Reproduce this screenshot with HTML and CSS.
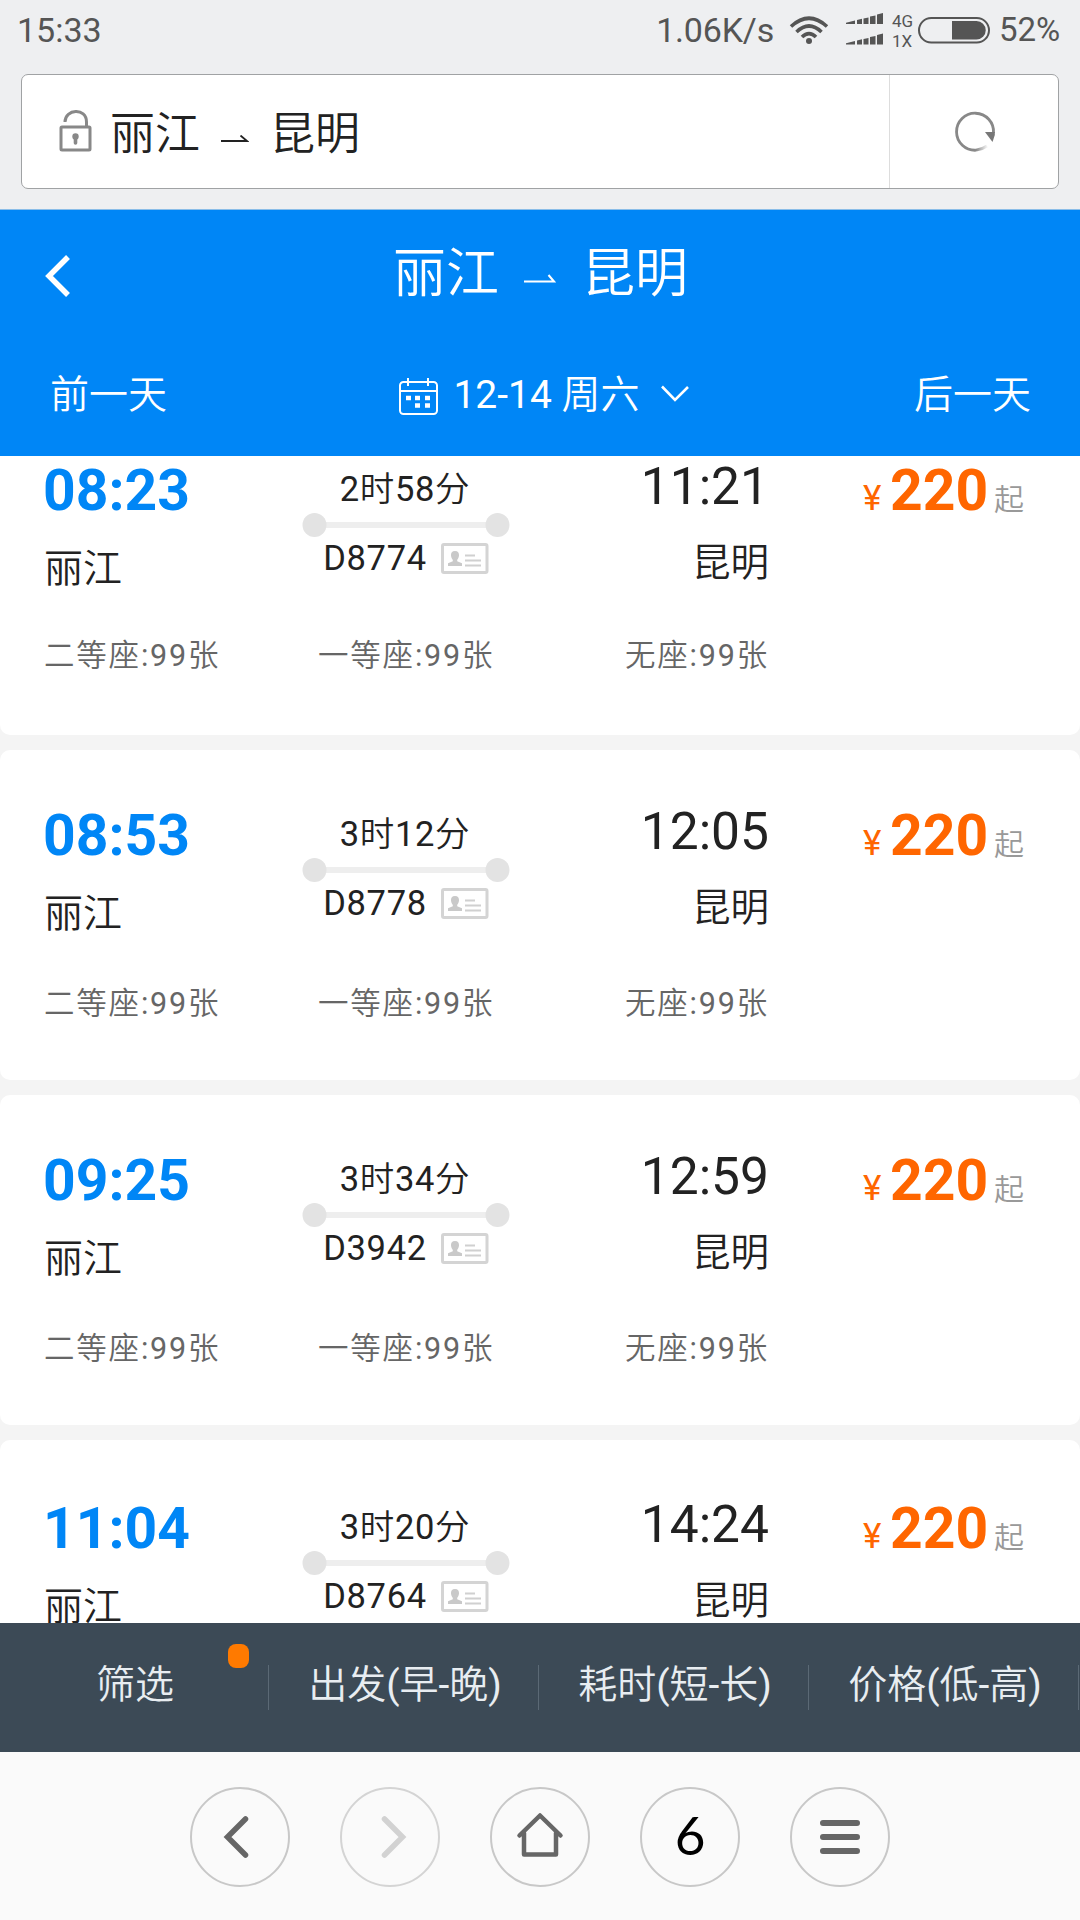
FILE: index.html
```html
<!DOCTYPE html>
<html lang="zh-CN">
<head>
<meta charset="utf-8">
<title>丽江 ⇀ 昆明</title>
<link rel="stylesheet" href="styles.css">
</head>
<body>
<svg class="defs" width="0" height="0">
  <symbol id="route" viewBox="0 0 208 24"><rect x="12" y="9" width="184" height="6" fill="#eee"/><circle cx="12.5" cy="12" r="12" fill="#e3e3e3"/><circle cx="195.500" cy="12" r="12" fill="#e3e3e3"/></symbol>
  <symbol id="idcard" viewBox="0 0 48 31"><rect x="1.500" y="1.500" width="44.500" height="28" rx="1.500" fill="#fff" stroke="#d4d4d4" stroke-width="3"/><path d="M14 8c-3 0-4.200 2-4 4.500.2 2.500 1.200 3.500 1.800 4.300v1.400L7 20.300V23h14v-2.700l-4.800-2.100v-1.400c.6-.8 1.600-1.800 1.800-4.300.2-2.500-1-4.500-4-4.500z" fill="#c9c9c9"/><path d="M24 12.500h10M24 17.500h16M24 22.500h16" stroke="#d0d0d0" stroke-width="2"/></symbol>
</svg>

<header class="statusbar">
  <span class="clock">15:33</span>
  <span class="speed">1.06K/s</span>
  <svg class="wifi" width="40" height="30" viewBox="0 0 40 30" fill="none" stroke="#555" stroke-width="3.600"><path d="M2 11.500Q20-5 38 11.500M7.500 17Q20 5 32.500 17M13 22Q20 15 27 22"/><circle cx="20" cy="26" r="3" fill="#555" stroke="none"/></svg>
  <svg class="signal" width="38" height="34" viewBox="0 0 38 34" fill="#555"><path id="bars" d="M0 11V9.800L9 7.500V11zM11 11V7l5-1.200V11zM17.500 11V5.500l5-1V11zM24 11V3.500l5.500-1V11zM31 11V1.500l6-1.500V11z"/><use href="#bars" y="20.500"/></svg>
  <span class="network"><span>4G</span><span>1X</span></span>
  <svg class="battery" width="72" height="28" viewBox="0 0 72 28"><rect x="1" y="2" width="70" height="24.500" rx="12.250" fill="none" stroke="#555" stroke-width="2"/><path d="M34 5h24.500a9 9 0 0 1 0 18.500H34z" fill="#555"/></svg>
  <span class="percent">52%</span>
</header>

<div class="address">
  <div class="page-name">
    <svg width="34" height="42" viewBox="0 0 34 42" fill="none" stroke="#888"><rect x="2" y="17" width="29" height="23" rx="1" stroke-width="3"/><path d="M6 12C6 -1.500 27.500-2.500 27.500 12v4" stroke-width="3"/><path d="M16.500 26v7" stroke-width="3.600" stroke-linecap="round"/><circle cx="16.500" cy="26.500" r="3.200" fill="#888" stroke="none"/></svg>
    <span>丽江</span>
    <svg class="arrow" width="28" height="8" viewBox="0 0 28 8"><path d="M0 6h26L19.500.5" fill="none" stroke="#222" stroke-width="1.800"/></svg>
    <span>昆明</span>
  </div>
  <div class="reload">
    <svg width="42" height="42" viewBox="0 0 42 42"><defs><linearGradient id="fade" gradientUnits="userSpaceOnUse" x1="22" y1="0" x2="33" y2="0"><stop offset="0" stop-color="#888"/><stop offset="1" stop-color="#888" stop-opacity=".1"/></linearGradient></defs><path d="M22 39.200A18.500 18.500 0 1 1 39.500 22" fill="none" stroke="#888" stroke-width="2.800"/><path d="M22 39.200Q28 38.500 33 35" fill="none" stroke="url(#fade)" stroke-width="2.800"/><path d="M31 21h9.800v3l-2.300 7z" fill="#777"/></svg>
  </div>
</div>

<section class="route-header">
  <div class="title-row">
    <svg class="back" width="27" height="44" viewBox="0 0 27 44"><path d="M24 3L5 22l19 19" fill="none" stroke="#fff" stroke-width="5.500"/></svg>
    <h1><span>丽江</span><svg width="32" height="10" viewBox="0 0 32 10"><path d="M0 7.500h30L24.500 1" fill="none" stroke="#fff" stroke-width="2"/></svg><span>昆明</span></h1>
  </div>
  <div class="date-row">
    <span class="day">前一天</span>
    <span class="date">
      <svg width="39" height="38" viewBox="0 0 39 38" fill="none" stroke="#fff" stroke-width="2"><rect x="1" y="4" width="37" height="32" rx="3.500"/><path d="M1 13h37M9 0v8M29 0v8"/><path d="M7 20h5M16 20h5M26 20h5M16 27.500h5M26 27.500h5" stroke-width="4.500"/></svg>
      <span>12-14 周六</span>
      <svg class="chevron" width="28" height="18" viewBox="0 0 28 18"><path d="M1 1.500l13 13.500L27 2" fill="none" stroke="#fff" stroke-width="2.600"/></svg>
    </span>
    <span class="day">后一天</span>
  </div>
</section>

<main class="trains">
  <article class="card scrolled">
    <div class="trip">
      <div class="depart"><b>08:23</b><span>丽江</span></div>
      <div class="middle"><span class="duration">2时58分</span><svg class="track"><use href="#route"/></svg><span class="number">D8774<svg><use href="#idcard"/></svg></span></div>
      <div class="arrive"><span class="time">11:21</span><span class="city">昆明</span></div>
      <div class="price"><span>¥</span><b>220</b><small>起</small></div>
    </div>
    <div class="seats"><span>二等座:99张</span><span>一等座:99张</span><span>无座:99张</span></div>
  </article>
  <article class="card">
    <div class="trip">
      <div class="depart"><b>08:53</b><span>丽江</span></div>
      <div class="middle"><span class="duration">3时12分</span><svg class="track"><use href="#route"/></svg><span class="number">D8778<svg><use href="#idcard"/></svg></span></div>
      <div class="arrive"><span class="time">12:05</span><span class="city">昆明</span></div>
      <div class="price"><span>¥</span><b>220</b><small>起</small></div>
    </div>
    <div class="seats"><span>二等座:99张</span><span>一等座:99张</span><span>无座:99张</span></div>
  </article>
  <article class="card">
    <div class="trip">
      <div class="depart"><b>09:25</b><span>丽江</span></div>
      <div class="middle"><span class="duration">3时34分</span><svg class="track"><use href="#route"/></svg><span class="number">D3942<svg><use href="#idcard"/></svg></span></div>
      <div class="arrive"><span class="time">12:59</span><span class="city">昆明</span></div>
      <div class="price"><span>¥</span><b>220</b><small>起</small></div>
    </div>
    <div class="seats"><span>二等座:99张</span><span>一等座:99张</span><span>无座:99张</span></div>
  </article>
  <article class="card last">
    <div class="trip">
      <div class="depart"><b>11:04</b><span>丽江</span></div>
      <div class="middle"><span class="duration">3时20分</span><svg class="track"><use href="#route"/></svg><span class="number">D8764<svg><use href="#idcard"/></svg></span></div>
      <div class="arrive"><span class="time">14:24</span><span class="city">昆明</span></div>
      <div class="price"><span>¥</span><b>220</b><small>起</small></div>
    </div>
  </article>
</main>

<nav class="filters">
  <span class="tab">筛选<i class="dot"></i></span>
  <span class="tab">出发(早-晚)</span>
  <span class="tab">耗时(短-长)</span>
  <span class="tab">价格(低-高)</span>
</nav>

<footer class="browser-nav">
  <span class="round"><svg width="50" height="50" viewBox="0 0 50 50"><path d="M30.500 7L12.500 25l18 18" fill="none" stroke="#666" stroke-width="5.500" stroke-linecap="round"/></svg></span>
  <span class="round disabled"><svg width="50" height="50" viewBox="0 0 50 50"><path d="M19.500 7l18 18-18 18" fill="none" stroke="#d2d2d2" stroke-width="5.500" stroke-linecap="round"/></svg></span>
  <span class="round"><svg width="50" height="50" viewBox="0 0 50 50" fill="none" stroke="#666" stroke-width="4.500" stroke-linecap="round" stroke-linejoin="round"><path d="M4.500 23.500L25 3.500l20.500 20"/><path d="M9 21v21.500h32V21" /></svg></span>
  <span class="round tabs">6</span>
  <span class="round"><svg width="50" height="50" viewBox="0 0 50 50"><path d="M8 11h34M8 25h34M8 39h34" stroke="#666" stroke-width="6" stroke-linecap="round"/></svg></span>
</footer>
</body>
</html>
```
FILE: styles.css
```css
* { box-sizing: border-box; }
body {
  margin: 0;
  width: 1080px;
  height: 1920px;
  overflow: hidden;
  display: flex;
  flex-direction: column;
  background: #eeeff1;
  color: #222;
  font-family: Roboto, "Noto Sans CJK SC DemiLight", "Noto Sans CJK SC Light", "Noto Sans CJK SC", sans-serif;
}
svg { display: block; flex: none; }
.defs { display: none; }

.statusbar {
  height: 74px;
  flex: none;
  display: flex;
  align-items: flex-start;
  padding: 9px 17px 0 17px;
  color: #555;
  font-size: 34px;
  line-height: 42px;
  white-space: nowrap;
}
.speed { margin-left: auto; letter-spacing: -.2px; }
.wifi { margin: 6px 0 0 15px; }
.signal { margin: 4px 0 0 17px; }
.network {
  display: flex;
  flex-direction: column;
  width: 26px;
  margin: 2px 0 0 8px;
  font-size: 17px;
  line-height: 20px;
}
.battery { margin-top: 7px; }
.percent { width: 64px; margin-left: 9px; font-size: 33px; line-height: 42px; }

.address {
  flex: none;
  display: flex;
  width: 1038px;
  height: 115px;
  margin: 0 21px 20px;
  border: 1px solid #a0a2a4;
  border-radius: 7px;
  background: #fff;
}
.page-name { flex: 1; display: flex; align-items: center; padding-left: 37px; font-size: 45px; line-height: 60px; }
.page-name span { padding-top: 6px; }
.page-name svg:first-child { margin: 0 17px 1px 0; }
.page-name .arrow { margin: 15px 21px 0 21px; }
.reload { width: 169px; padding-left: 1px; border-left: 1px solid #ddd; display: flex; align-items: center; justify-content: center; }

.route-header { flex: none; height: 247px; background: #0086f6; border-top: 1px solid #8abde8; color: #fff; }
.title-row { display: flex; height: 127px; padding-top: 26px; }
.back { margin: 18px 0 0 44px; }
h1 { display: flex; margin: 0 0 0 322px; font-size: 53px; line-height: 76px; font-weight: 400; }
h1 svg { margin: 38px 26px 0 25px; }
.date-row { display: flex; justify-content: space-between; padding: 28px 49px 0 50px; font-size: 39px; line-height: 60px; white-space: nowrap; }
.date { display: flex; margin-left: 7px; }
.date svg:first-child { margin: 13px 15px 0 0; }
.date .chevron { margin: 20px 0 0 21px; }

.trains { flex: none; height: 1167px; overflow: hidden; background: #f4f4f4; display: flex; flex-direction: column; gap: 15px; }
.card { flex: none; height: 330px; border-radius: 10px; background: #fff; }
.scrolled { margin-top: -51px; }
.last { padding-top: 3px; }
.trip { display: grid; grid-template-columns: 258px 208px 259px 1fr; height: 236px; padding-left: 44px; white-space: nowrap; }
.scrolled .trip { height: 233px; }
.depart, .middle, .arrive { display: flex; flex-direction: column; }
.depart { padding-top: 56px; }
.depart b { margin-left: -1px; color: #0086f6; font-size: 57px; line-height: 60px; }
.depart span { margin-top: 26px; font-size: 39px; line-height: 44px; }
.middle { padding-top: 64px; align-items: center; font-size: 34.500px; line-height: 40px; letter-spacing: .7px; }
.duration { margin-left: -2px; }
.track { width: 208px; height: 24px; margin: 4px 0 1px; }
.number { display: flex; }
.number svg { width: 48px; height: 31px; margin: 5px 0 0 14px; }
.arrive { padding-top: 54px; align-items: flex-end; }
.time { font-size: 51.500px; line-height: 56px; }
.city { margin: 26px 0 0; font-size: 38.500px; line-height: 44px; }
.price { display: flex; align-items: baseline; padding: 56px 0 0 94px; color: #ff6600; }
.price span { width: 27px; font-size: 35px; }
.price b { font-size: 57px; line-height: 60px; }
.price small { margin-left: 6px; color: #999; font-size: 30px; }
.seats { display: grid; grid-template-columns: 274px 307px 1fr; padding-left: 44px; color: #666; font-size: 30.500px; line-height: 36px; letter-spacing: 1.800px; }

.filters { flex: none; display: grid; grid-template-columns: repeat(4, 270px); height: 129px; background: #3c4a56; color: #e8edf1; }
.tab { position: relative; width: 269px; height: 87px; padding: 39px 0 0 2px; font-size: 39px; line-height: 46px; text-align: center; border-right: 1px solid #586672; border-image: linear-gradient(transparent 48%, #5b6975 48%) 1; white-space: nowrap; }
.dot { position: absolute; left: 228px; top: 21px; width: 21px; height: 24px; border-radius: 8px; background: #ff7a00; }

.browser-nav { flex: 1; display: flex; justify-content: center; gap: 50px; padding-top: 35px; background: #fafafa; }
.round { width: 100px; height: 100px; border: 2px solid #c8c8c8; border-radius: 50%; display: flex; align-items: center; justify-content: center; }
.disabled { border-color: #d4d4d4; }
.tabs { color: #000; font: 400 53px/96px Lato, sans-serif; padding-bottom: 5px; }
```
